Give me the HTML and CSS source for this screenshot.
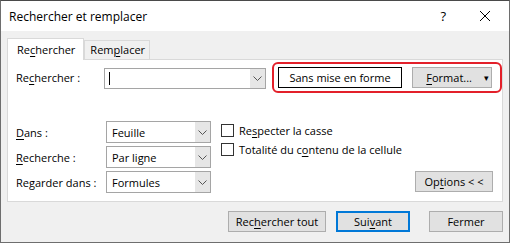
FILE: index.html
```html
<!DOCTYPE html>
<html lang="fr">
<head>
    <meta charset="UTF-8">
    <title>Rechercher et remplacer</title>
    <link rel="stylesheet" href="styles.css">
</head>
<body>
    <div class="window">
        <div class="titlebar">
            <span class="title">Rechercher et remplacer</span>
            <span class="help">?</span>
            <svg class="close" width="12" height="12" viewBox="0 0 12 12">
                <path d="M1 1 L11 11 M11 1 L1 11" stroke="#000" stroke-width="1"/>
            </svg>
        </div>
        <div class="content">
            <div class="tabs">
                <div class="tab active">Re<u>c</u>hercher</div>
                <div class="tab">Rem<u>p</u>lacer</div>
            </div>
            <div class="panel">
                <div class="find-row">
                    <label class="find-label">Re<u>c</u>hercher :</label>
                    <div class="combo find-combo">
                        <span class="value"><span class="caret"></span></span>
                        <span class="arrow"><svg width="9" height="5" viewBox="0 0 9 5"><path d="M0.5 0.5 L4.5 4.5 L8.5 0.5" fill="none" stroke="#555"/></svg></span>
                    </div>
                    <div class="highlight">
                        <div class="format-preview">Sans mise en forme</div>
                        <button class="btn format-btn"><span><u>F</u>ormat...</span><span class="tri">▾</span></button>
                    </div>
                </div>
                <div class="options">
                    <div class="fields">
                        <label><u>D</u>ans :</label>
                        <div class="combo">
                            <span class="value">Feuille</span>
                            <span class="arrow"><svg width="9" height="5" viewBox="0 0 9 5"><path d="M0.5 0.5 L4.5 4.5 L8.5 0.5" fill="none" stroke="#555"/></svg></span>
                        </div>
                        <label><u>R</u>echerche :</label>
                        <div class="combo">
                            <span class="value">Par ligne</span>
                            <span class="arrow"><svg width="9" height="5" viewBox="0 0 9 5"><path d="M0.5 0.5 L4.5 4.5 L8.5 0.5" fill="none" stroke="#555"/></svg></span>
                        </div>
                        <label>Re<u>g</u>arder dans :</label>
                        <div class="combo">
                            <span class="value">Formules</span>
                            <span class="arrow"><svg width="9" height="5" viewBox="0 0 9 5"><path d="M0.5 0.5 L4.5 4.5 L8.5 0.5" fill="none" stroke="#555"/></svg></span>
                        </div>
                    </div>
                    <div class="checks">
                        <div class="check"><span class="box"></span><span>Re<u>s</u>pecter la casse</span></div>
                        <div class="check"><span class="box"></span><span>Totalité du c<u>o</u>ntenu de la cellule</span></div>
                    </div>
                    <button class="btn options-btn">Op<u>t</u>ions &lt; &lt;</button>
                </div>
            </div>
            <div class="actions">
                <button class="btn find-all">Rec<u>h</u>ercher tout</button>
                <button class="btn default">Sui<u>v</u>ant</button>
                <button class="btn close-btn">Fermer</button>
            </div>
        </div>
    </div>
</body>
</html>
```

FILE: styles.css
```css
* {
    box-sizing: border-box;
}
body {
    margin: 0;
    font-family: "Open Sans", "Noto Sans", sans-serif;
    font-size: 11px;
    color: #000;
}
u {
    text-decoration: underline;
    text-underline-offset: 2px;
}
.window {
    width: 510px;
    height: 243px;
    border: 1px solid #6e6e6e;
    border-top-color: #4a4a4a;
    display: flex;
    flex-direction: column;
    background: #f0f0f0;
}
.titlebar {
    height: 30px;
    background: #fff;
    display: flex;
    align-items: center;
    padding: 0 0 0 8px;
}
.title {
    flex: 1;
    font-size: 12px;
}
.help {
    font-size: 13px;
    margin-right: 33px;
}
.close {
    margin-right: 18px;
}
.content {
    flex: 1;
    padding: 7px 6px 0 6px;
}
.tabs {
    display: flex;
    align-items: flex-end;
    height: 21px;
    position: relative;
    z-index: 1;
}
.tab {
    border: 1px solid #d9d9d9;
    border-bottom: none;
    background: #f0f0f0;
    height: 19px;
    padding: 0 4px 0 5px;
    line-height: 18px;
    white-space: nowrap;
}
.tab.active {
    background: #fff;
    height: 22px;
    padding: 0 8px 0 9px;
    margin-bottom: -1px;
    line-height: 22px;
}
.panel {
    background: #fff;
    border: 1px solid #d9d9d9;
    height: 143px;
    padding: 2px 0 0 8px;
}
.find-row {
    display: flex;
    align-items: center;
}
.find-label {
    width: 88px;
}
.combo {
    display: flex;
    height: 21px;
    border: 1px solid #a5a5a5;
    background: #fff;
}
.combo .value {
    flex: 1;
    padding-left: 5px;
    line-height: 19px;
    display: flex;
    align-items: center;
}
.combo .arrow {
    width: 16px;
    background: #e6e6e6;
    border-left: 1px solid #fff;
    display: flex;
    align-items: center;
    justify-content: center;
}
.find-combo {
    width: 162px;
    margin-top: 1px;
}
.caret {
    width: 1px;
    height: 13px;
    background: #000;
    margin-left: -1px;
}
.highlight {
    margin-left: 6px;
    border: 2px solid #e3202a;
    border-radius: 6px;
    height: 31px;
    width: 230px;
    display: flex;
    align-items: center;
    padding: 0 0 0 4px;
}
.format-preview {
    width: 124px;
    height: 21px;
    border: 1px solid #000;
    text-align: center;
    line-height: 19px;
    white-space: nowrap;
}
.btn {
    font-family: inherit;
    font-size: 11px;
    color: #000;
    background: #e1e1e1;
    border: 1px solid #adadad;
    height: 21px;
    padding: 0;
    white-space: nowrap;
}
.format-btn {
    width: 80px;
    margin-left: 10px;
    display: flex;
    align-items: center;
    justify-content: flex-end;
    gap: 12px;
    padding-right: 2px;
}
.tri {
    font-size: 9px;
}
.options {
    display: flex;
    align-items: flex-start;
    margin-top: 28px;
}
.fields {
    display: grid;
    grid-template-columns: 90px 105px;
    row-gap: 3px;
    align-items: center;
    white-space: nowrap;
}
.fields .combo {
    height: 22px;
}
.checks {
    margin: 2px 0 0 10px;
    display: flex;
    flex-direction: column;
    gap: 5px;
    flex: 1;
}
.check {
    display: flex;
    align-items: center;
    height: 14px;
    white-space: nowrap;
}
.box {
    width: 13px;
    height: 13px;
    border: 1px solid #333;
    margin-right: 5px;
}
.options-btn {
    width: 78px;
    margin: 50px 9px 0 0;
}
.actions {
    display: flex;
    justify-content: flex-end;
    margin-top: 9px;
}
.find-all {
    width: 98px;
}
.default {
    width: 74px;
    margin-left: 10px;
    border: 2px solid #0078d7;
}
.close-btn {
    width: 74px;
    margin-left: 19px;
}
```
